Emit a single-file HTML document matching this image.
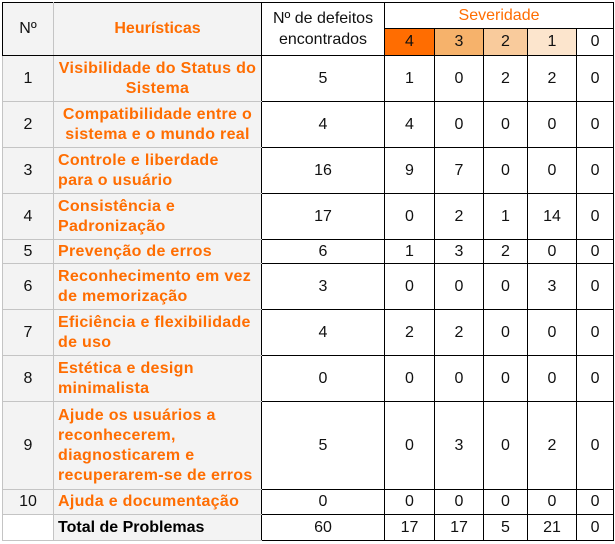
<!DOCTYPE html>
<html><head><meta charset="utf-8"><style>
body{margin:0;background:#fff;width:615px;height:544px;overflow:hidden;font-family:"Liberation Sans",Arial,sans-serif;font-size:16px;}
table{position:absolute;left:2px;top:2px;width:611px;border-collapse:collapse;table-layout:fixed;}
td{padding:0 3px;line-height:20px;text-align:center;border:1px solid #000;color:#111;overflow:hidden;white-space:nowrap;}
td.n{background:#f3f3f3;border-color:#c4c4c4;}
td.h{background:#f3f3f3;border-color:#c4c4c4;color:#ff6d01;font-weight:bold;text-align:left;white-space:nowrap;border-right-color:#000;padding:0 2px 0 4px;letter-spacing:0.3px;}
td.c{text-align:center;padding:0;}
tr.hd td.n,tr.hd td.h{border-top-color:#000;border-bottom-color:#000;}
tr.hd td.first{border-left-color:#000;}
.sev{color:#ff6d01;}
</style></head><body>
<table>
<colgroup><col style="width:51px"><col style="width:208px"><col style="width:123px"><col style="width:50px"><col style="width:49px"><col style="width:44px"><col style="width:49px"><col style="width:37px"></colgroup>
<tr class="hd" style="height:26px"><td class="n first" rowspan="2">Nº</td><td class="h c" rowspan="2" style="letter-spacing:0">Heurísticas</td><td rowspan="2" style="line-height:21px;white-space:normal">Nº de defeitos encontrados</td><td colspan="5" class="sev">Severidade</td></tr>
<tr style="height:27px"><td style="background:#ff6d01">4</td><td style="background:#f6b26b">3</td><td style="background:#f9cb9c">2</td><td style="background:#fce5cd">1</td><td>0</td></tr>
<tr style="height:46px"><td class="n">1</td><td class="h c">Visibilidade do Status do<br>Sistema</td><td>5</td><td>1</td><td>0</td><td>2</td><td>2</td><td>0</td></tr>
<tr style="height:46px"><td class="n">2</td><td class="h c">Compatibilidade entre o<br>sistema e o mundo real</td><td>4</td><td>4</td><td>0</td><td>0</td><td>0</td><td>0</td></tr>
<tr style="height:46px"><td class="n">3</td><td class="h">Controle e liberdade<br>para o usuário</td><td>16</td><td>9</td><td>7</td><td>0</td><td>0</td><td>0</td></tr>
<tr style="height:46px"><td class="n">4</td><td class="h">Consistência e<br>Padronização</td><td>17</td><td>0</td><td>2</td><td>1</td><td>14</td><td>0</td></tr>
<tr style="height:24px"><td class="n">5</td><td class="h">Prevenção de erros</td><td>6</td><td>1</td><td>3</td><td>2</td><td>0</td><td>0</td></tr>
<tr style="height:46px"><td class="n">6</td><td class="h">Reconhecimento em vez<br>de memorização</td><td>3</td><td>0</td><td>0</td><td>0</td><td>3</td><td>0</td></tr>
<tr style="height:46px"><td class="n">7</td><td class="h">Eficiência e flexibilidade<br>de uso</td><td>4</td><td>2</td><td>2</td><td>0</td><td>0</td><td>0</td></tr>
<tr style="height:46px"><td class="n">8</td><td class="h">Estética e design<br>minimalista</td><td>0</td><td>0</td><td>0</td><td>0</td><td>0</td><td>0</td></tr>
<tr style="height:88px"><td class="n">9</td><td class="h">Ajude os usuários a<br>reconhecerem,<br>diagnosticarem e<br>recuperarem-se de erros</td><td>5</td><td>0</td><td>3</td><td>0</td><td>2</td><td>0</td></tr>
<tr style="height:25px"><td class="n">10</td><td class="h">Ajuda e documentação</td><td>0</td><td>0</td><td>0</td><td>0</td><td>0</td><td>0</td></tr>
<tr style="height:26px"><td class="n" style="background:#fff">&nbsp;</td><td class="h" style="color:#000;letter-spacing:0">Total de Problemas</td><td>60</td><td>17</td><td>17</td><td>5</td><td>21</td><td>0</td></tr>
</table>
</body></html>
